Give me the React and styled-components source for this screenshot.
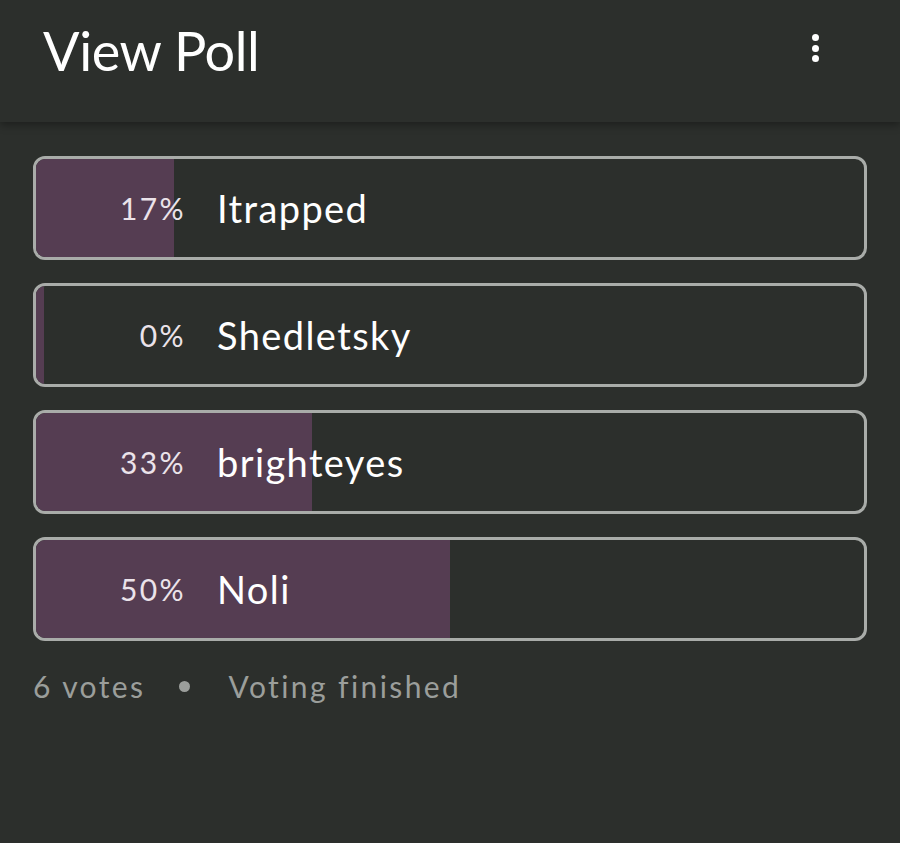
import React from "react";
import styled, { createGlobalStyle } from "styled-components";

const GlobalStyle = createGlobalStyle`
  html, body {
    margin: 0;
    padding: 0;
    background: #2c2f2c;
  }
  body {
    font-family: "Lato", "Noto Sans", sans-serif;
    height: 843px;
    overflow: hidden;
  }
`;

const Page = styled.div`
  width: 900px;
  height: 843px;
  background: #2c2f2c;
  display: flex;
  flex-direction: column;
`;

const Header = styled.header`
  height: 122px;
  display: flex;
  align-items: flex-start;
  justify-content: space-between;
  padding: 0 70px 0 43px;
  box-sizing: border-box;
  background: #2c2f2c;
  box-shadow: 0 3px 8px rgba(0, 0, 0, 0.35);
  position: relative;
  z-index: 1;
`;

const Title = styled.h1`
  margin: 0;
  padding-top: 18px;
  font-size: 54px;
  line-height: 66px;
  font-weight: 400;
  color: #ffffff;
  letter-spacing: -0.4px;
`;

const MenuButton = styled.button`
  margin-top: 34px;
  width: 30px;
  height: 28px;
  background: none;
  border: none;
  padding: 0;
  display: flex;
  flex-direction: column;
  align-items: center;
  justify-content: space-between;
`;

const Dot = styled.span`
  width: 7px;
  height: 7px;
  border-radius: 50%;
  background: #ffffff;
`;

const Content = styled.main`
  padding: 34px 33px 0 33px;
  display: flex;
  flex-direction: column;
  gap: 23px;
`;

const Option = styled.div`
  position: relative;
  height: 104px;
  box-sizing: border-box;
  border: 3px solid #a9aca9;
  border-radius: 12px;
  overflow: hidden;
  display: flex;
  align-items: center;
`;

const Fill = styled.div`
  position: absolute;
  left: 0;
  top: 0;
  bottom: 0;
  background: #553d52;
`;

const Percent = styled.span`
  position: relative;
  width: 150px;
  text-align: right;
  font-size: 30px;
  color: #ebe3ea;
  letter-spacing: 2.4px;
`;

const Label = styled.span`
  position: relative;
  margin-left: 31px;
  font-size: 38px;
  color: #ffffff;
  letter-spacing: 1.4px;
`;

const Footer = styled.div`
  display: flex;
  align-items: center;
  margin-top: 4px;
  font-size: 30px;
  color: #9b9e9b;
  letter-spacing: 2.4px;
`;

const Bullet = styled.span`
  width: 11px;
  height: 11px;
  border-radius: 50%;
  background: #9b9e9b;
  margin: 0 38px 0 34px;
`;

const options = [
  { votes: 1, name: "Itrapped" },
  { votes: 0, name: "Shedletsky" },
  { votes: 2, name: "brighteyes" },
  { votes: 3, name: "Noli" },
];

const TOTAL = 6;
const INNER = 828;

export default function App() {
  return (
    <Page>
      <GlobalStyle />
      <Header>
        <Title>View Poll</Title>
        <MenuButton aria-label="More options">
          <Dot />
          <Dot />
          <Dot />
        </MenuButton>
      </Header>
      <Content>
        {options.map((o) => (
          <Option key={o.name}>
            <Fill style={{ width: Math.max(8, Math.round((INNER * o.votes) / TOTAL)) }} />
            <Percent>{Math.round((o.votes / TOTAL) * 100)}%</Percent>
            <Label>{o.name}</Label>
          </Option>
        ))}
        <Footer>
          6 votes
          <Bullet />
          Voting finished
        </Footer>
      </Content>
    </Page>
  );
}
